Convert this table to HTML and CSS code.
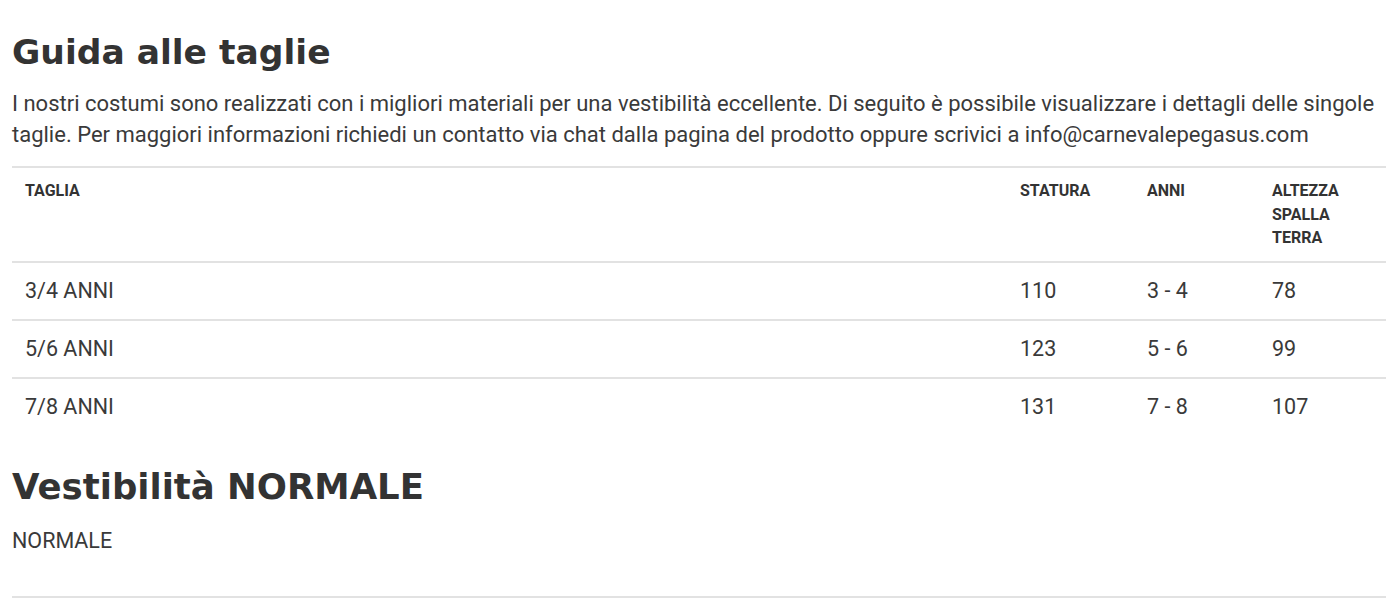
FILE: index.html
```html
<!DOCTYPE html>
<html lang="it">
<head>
<meta charset="utf-8">
<link rel="stylesheet" href="styles.css">
</head>
<body>
<div class="guide">
  <h2 class="title">Guida alle taglie</h2>
  <p class="intro">I nostri costumi sono realizzati con i migliori materiali per una vestibilità eccellente. Di seguito è possibile visualizzare i dettagli delle singole taglie. Per maggiori informazioni richiedi un contatto via chat dalla pagina del prodotto oppure scrivici a info@carnevalepegasus.com</p>
  <table class="sizes">
    <colgroup>
      <col class="c1"><col class="c2"><col class="c3"><col class="c4">
    </colgroup>
    <thead>
      <tr><th>TAGLIA</th><th>STATURA</th><th>ANNI</th><th>ALTEZZA SPALLA TERRA</th></tr>
    </thead>
    <tbody>
      <tr><td>3/4 ANNI</td><td>110</td><td>3 - 4</td><td>78</td></tr>
      <tr><td>5/6 ANNI</td><td>123</td><td>5 - 6</td><td>99</td></tr>
      <tr><td>7/8 ANNI</td><td>131</td><td>7 - 8</td><td>107</td></tr>
    </tbody>
  </table>
  <h2 class="title fit">Vestibilità NORMALE</h2>
  <p class="fit-text">NORMALE</p>
  <div class="rule"></div>
</div>
</body>
</html>
```

FILE: styles.css
```css
html, body {
  margin: 0;
  padding: 0;
  background: #fff;
}
body {
  font-family: Roboto, "Liberation Sans", sans-serif;
  color: #333;
}
.guide {
  padding: 0 2px 0 12px;
}
.title {
  font-family: "DejaVu Sans", sans-serif;
  font-weight: 700;
  font-size: 34.5px;
  line-height: 44px;
  color: #333;
  margin: 0;
  padding-top: 30px;
}
.intro {
  margin: 14px 0 0;
  font-size: 22px;
  line-height: 31px;
  color: #3a3a3a;
}
.sizes {
  width: 100%;
  border-collapse: collapse;
  margin-top: 16px;
  border-top: 2px solid #e2e2e2;
}
.c1 { width: 995px; }
.c2 { width: 127px; }
.c3 { width: 125px; }
.c4 { width: 127px; }
.sizes th {
  text-align: left;
  vertical-align: top;
  font-size: 16px;
  font-weight: 700;
  line-height: 23.5px;
  color: #333;
  padding: 11px 13px 11px;
  border-bottom: 2px solid #e2e2e2;
}
.sizes td {
  font-size: 21.5px;
  line-height: 26px;
  color: #3a3a3a;
  padding: 15px 13px 15px;
}
.sizes tbody tr + tr td {
  border-top: 2px solid #e2e2e2;
}
.fit {
  font-size: 35.5px;
  padding-top: 30px;
}
.fit-text {
  margin: 19px 0 0;
  font-size: 21.5px;
  line-height: 26px;
  color: #3a3a3a;
}
.rule {
  margin-top: 42px;
  border-top: 2px solid #e2e2e2;
}
```
